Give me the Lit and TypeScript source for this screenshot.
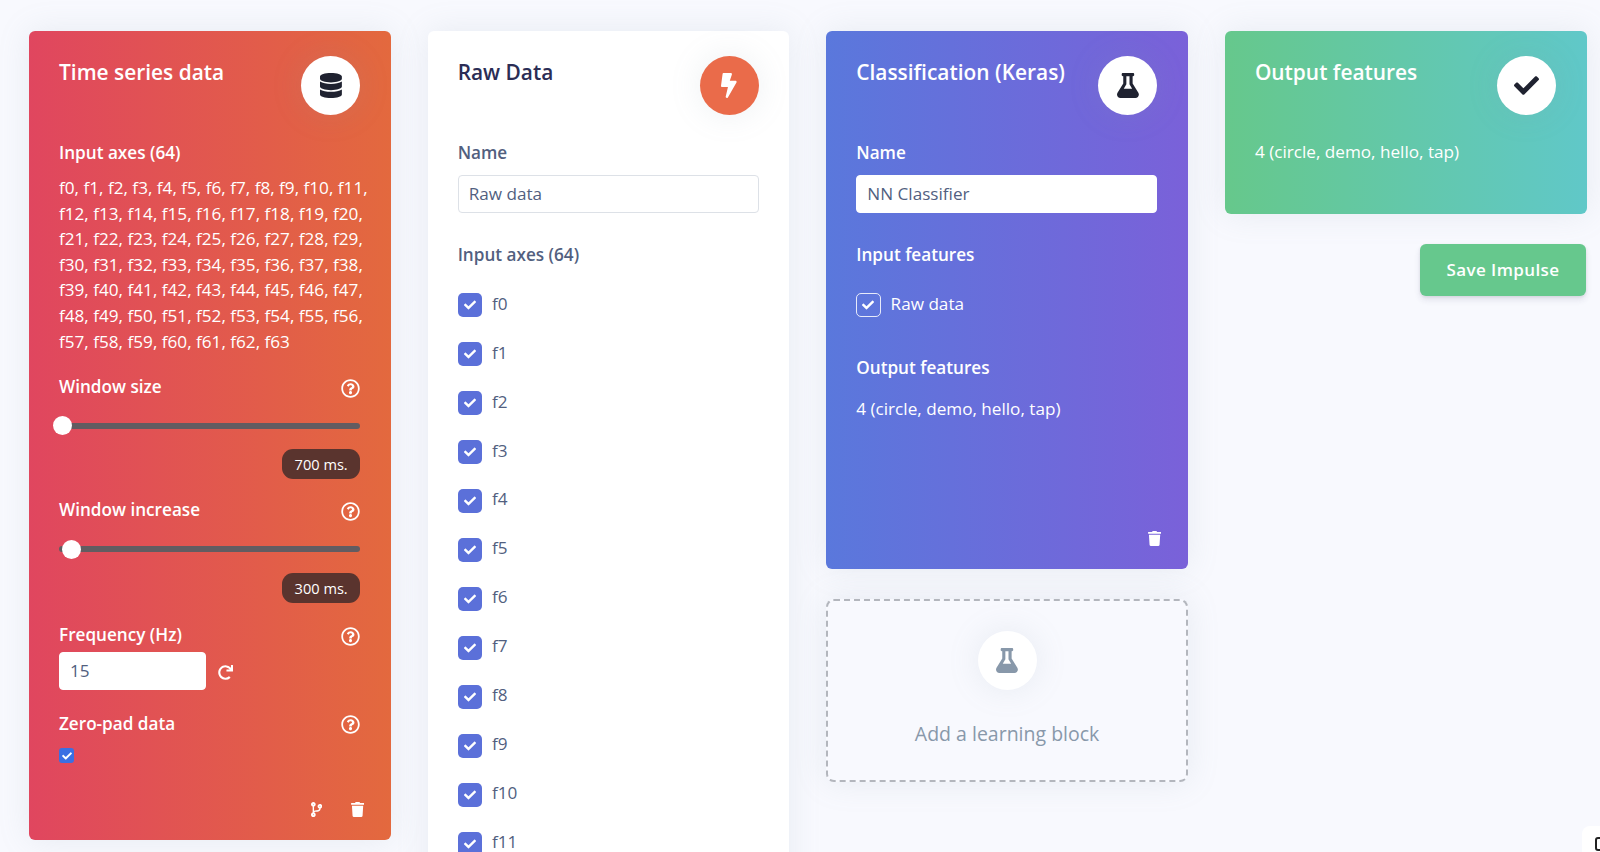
import { LitElement, html, css, svg } from "lit";
import { customElement } from "lit/decorators.js";

const ICONS: Record<string, [string, string]> = {
  database: ["0 0 448 512", "M448 73.143v45.714C448 159.143 347.667 192 224 192S0 159.143 0 118.857V73.143C0 32.857 100.333 0 224 0s224 32.857 224 73.143zM448 176v102.857C448 319.143 347.667 352 224 352S0 319.143 0 278.857V176c48.125 33.143 136.208 48.572 224 48.572S399.874 209.143 448 176zm0 160v102.857C448 479.143 347.667 512 224 512S0 479.143 0 438.857V336c48.125 33.143 136.208 48.572 224 48.572S399.874 369.143 448 336z"],
  bolt: ["0 0 320 512", "M296 160H180.6l42.6-129.8C227.2 15 215.7 0 200 0H56C44 0 33.8 8.9 32.2 20.8l-32 240C-1.7 275.2 9.5 288 24 288h118.7L96.6 482.5c-3.6 15.2 8 29.5 23.3 29.5 8.4 0 16.4-4.4 20.8-12l176-304c9.3-15.9-2.2-36-20.7-36z"],
  flask: ["0 0 448 512", "M437.2 403.5L320 215V64h8c13.3 0 24-10.7 24-24V24c0-13.3-10.7-24-24-24H120c-13.3 0-24 10.7-24 24v16c0 13.3 10.7 24 24 24h8v151L10.8 403.5C-18.5 450.6 15.3 512 70.9 512h306.2c55.7 0 89.4-61.5 60.1-108.5zM137.9 320l48.2-77.6c3.7-5.2 5.8-11.6 5.8-18.4V64h64v160c0 6.9 2.2 13.2 5.8 18.4l48.2 77.6h-172z"],
  check: ["0 0 512 512", "M173.898 439.404l-166.4-166.4c-9.997-9.997-9.997-26.206 0-36.204l36.203-36.204c9.997-9.998 26.207-9.998 36.204 0L192 312.69 432.095 72.596c9.997-9.997 26.207-9.997 36.204 0l36.203 36.204c9.997 9.997 9.997 26.206 0 36.204l-294.4 294.401c-9.998 9.997-26.207 9.997-36.204-.001z"],
  trash: ["0 0 448 512", "M432 32H312l-9.4-18.7A24 24 0 0 0 281.1 0H166.8a23.72 23.72 0 0 0-21.4 13.3L136 32H16A16 16 0 0 0 0 48v32a16 16 0 0 0 16 16h416a16 16 0 0 0 16-16V48a16 16 0 0 0-16-16zM53.2 467a48 48 0 0 0 47.9 45h245.8a48 48 0 0 0 47.9-45L416 128H32z"],
  redo: ["0 0 512 512", "M500.33 0h-47.41a12 12 0 0 0-12 12.57l4 82.76A247.42 247.42 0 0 0 256 8C119.34 8 7.9 119.53 8 256.19 8.1 393.07 119.1 504 256 504a247.1 247.1 0 0 0 166.18-63.91 12 12 0 0 0 .48-17.43l-34-34a12 12 0 0 0-16.38-.55A176 176 0 1 1 402.1 157.8l-101.53-4.87a12 12 0 0 0-12.57 12v47.41a12 12 0 0 0 12 12h200.33a12 12 0 0 0 12-12V12a12 12 0 0 0-12-12z"],
  help: ["0 0 512 512", "M256 8C119.043 8 8 119.083 8 256c0 136.997 111.043 248 248 248s248-111.003 248-248C504 119.083 392.957 8 256 8zm0 448c-110.532 0-200-89.431-200-200 0-110.495 89.472-200 200-200 110.491 0 200 89.471 200 200 0 110.53-89.431 200-200 200zm107.244-255.2c0 67.052-72.421 68.084-72.421 92.863V300c0 6.627-5.373 12-12 12h-45.647c-6.627 0-12-5.373-12-12v-8.659c0-35.745 27.1-50.034 47.579-61.516 17.561-9.845 28.324-16.541 28.324-29.579 0-17.246-21.999-28.693-39.784-28.693-23.189 0-33.894 10.977-48.942 29.969-4.057 5.12-11.46 6.071-16.666 2.124l-27.824-21.098c-5.107-3.872-6.251-11.066-2.644-16.363C184.846 131.491 214.94 112 261.794 112c49.071 0 101.45 38.304 101.45 88.8zM298 368c0 23.159-18.841 42-42 42s-42-18.841-42-42 18.841-42 42-42 42 18.841 42 42z"],
  branch: ["0 0 384 512", "M384 144c0-44.2-35.8-80-80-80s-80 35.8-80 80c0 36.4 24.3 67.1 57.5 76.8-.6 16.1-4.2 28.5-11 36.9-15.4 19.2-49.3 22.4-85.2 25.7-28.2 2.6-57.4 5.4-81.3 16.9v-144c32.5-10.2 56-40.5 56-76.3 0-44.2-35.8-80-80-80S0 35.8 0 80c0 35.8 23.5 66.1 56 76.3v199.3C23.5 365.9 0 396.2 0 432c0 44.2 35.8 80 80 80s80-35.8 80-80c0-34-21.2-63.1-51.2-74.6 3.1-5.2 7.8-9.8 14.9-13.4 16.2-8.2 40.4-10.4 66.1-12.8 42.2-3.9 90-8.4 118.2-43.4 14-17.4 21.1-39.8 21.5-67.9 31.6-10.8 54.5-40.7 54.5-75.9zM80 64c8.8 0 16 7.2 16 16s-7.2 16-16 16-16-7.2-16-16 7.2-16 16-16zm0 384c-8.8 0-16-7.2-16-16s7.2-16 16-16 16 7.2 16 16-7.2 16-16 16zm224-320c8.8 0 16 7.2 16 16s-7.2 16-16 16-16-7.2-16-16 7.2-16 16-16z"],
};

const icon = (name: string, cls: string) => {
  const [vb, d] = ICONS[name];
  return html`<svg class=${cls} viewBox=${vb} aria-hidden="true">${svg`<path d=${d}></path>`}</svg>`;
};

const AXES = Array.from({ length: 64 }, (_, i) => `f${i}`);

@customElement("app-root")
export class AppRoot extends LitElement {
  static styles = css`
    :host {
      display: block;
      position: relative;
      height: 852px;
      overflow: hidden;
      background: #f8f9fe;
      font-family: "Open Sans", "Noto Sans", sans-serif;
      font-size: 17.15px;
      line-height: 25.6px;
      color: #525f7f;
    }
    * { box-sizing: border-box; }
    svg { display: block; fill: currentColor; flex: none; }
    .grid {
      display: grid;
      grid-template-columns: repeat(4, 1fr);
      gap: 37px;
      padding: 31px 13.5px 0 29px;
      align-items: start;
    }
    .col { display: flex; flex-direction: column; }
    .col3 { gap: 30px; }
    .col4 { gap: 30px; }
    .card {
      display: flex;
      flex-direction: column;
      border-radius: 6px;
      padding: 25px 30.5px 0 30px;
      background: #fff;
      box-shadow: 0 0 32px 0 rgba(136, 152, 170, 0.15);
    }
    .card > * { flex: none; }
    .red { background: linear-gradient(90deg, #e0465f 0, #e3693e 100%); color: #fff; height: 809px; }
    .blue { background: linear-gradient(90deg, #5a78dc 0, #7a61d9 100%); color: #fff; height: 538px; }
    .green { background: linear-gradient(88deg, #66c88b 0, #60c8c9 100%); color: #fff; height: 183px; }
    .raw { height: 900px; }
    .head { display: flex; justify-content: space-between; align-items: flex-start; height: 59px; }
    .title { font-size: 20.9px; line-height: 32px; font-weight: 600; color: #fff; }
    .raw .title { color: #2b2d55; }
    .circle {
      flex: none;
      width: 59px;
      height: 59px;
      border-radius: 50%;
      background: #fff;
      display: flex;
      align-items: center;
      justify-content: center;
      color: #1f2230;
      box-shadow: 0 0 32px 0 rgba(136, 152, 170, 0.15);
    }
    .circle.orange { background: #ea6b4a; color: #fff; }
    .i24 { height: 25px; width: auto; }
    .ico-check { width: 25px; height: 25px; }
    .label { font-weight: 600; }
    .raw .label { color: #525f7f; }
    .first { margin-top: 25px; }
    .axes { margin-top: 9.5px; margin-right: -12px; }
    .row { display: flex; justify-content: space-between; align-items: center; }
    .help { width: 19px; height: 19px; margin-top: 3px; }
    .gap-19 { margin-top: 19px; }
    .gap-19h { margin-top: 19.5px; }
    .gap-18 { margin-top: 18px; }
    .slider { position: relative; margin-top: 17px; height: 19px; display: flex; align-items: center; }
    .track { flex: 1; height: 6px; border-radius: 3px; background: #625c61; }
    .thumb {
      position: absolute;
      top: 0;
      width: 19px;
      height: 19px;
      border-radius: 50%;
      background: #fff;
    }
    .badge-row { display: flex; justify-content: flex-end; margin-top: 14px; }
    .badge {
      height: 30px;
      width: 78px;
      border-radius: 11px;
      background: #5a342e;
      color: #fff;
      font-size: 14.6px;
      line-height: 30px;
      text-align: center;
    }
    input.text {
      display: block;
      font: inherit;
      color: #525f7f;
      height: 38px;
      border: 1px solid #dde1e7;
      border-radius: 4px;
      padding: 0 10px;
      background: #fff;
      outline: none;
      width: 100%;
    }
    .blue input.text, .red input.text { border-color: #fff; }
    .name { margin-top: 9px; }
    .after-name { margin-top: 29.5px; }
    .freq { display: flex; align-items: center; gap: 12px; margin-top: 4px; }
    .freq input.text { width: 147px; }
    .redo { width: 15px; height: 15px; margin-top: 3px; }
    .gap-z { margin-top: 21px; }
    .mini {
      margin-top: 12px;
      width: 15px;
      height: 15px;
      border-radius: 3px;
      background: #3a6fe3;
      color: #fff;
      display: flex;
      align-items: center;
      justify-content: center;
    }
    .mini svg { width: 10px; height: 10px; }
    .card > .foot { margin-top: auto; margin-bottom: 23px; display: flex; justify-content: flex-end; gap: 29px; margin-right: -4px; }
    .foot svg { height: 15px; width: auto; }
    .raw-list { margin-top: 25px; display: flex; flex-direction: column; gap: 24.7px; }
    .opt { display: flex; align-items: center; gap: 10px; height: 24.3px; }
    .opt-text { padding-bottom: 3px; }
    .opt-first { margin-top: 25px; }
    .box {
      width: 24.3px;
      height: 24.3px;
      flex: none;
      border-radius: 5px;
      background: #5b70d9;
      color: #fff;
      display: flex;
      align-items: center;
      justify-content: center;
    }
    .box svg { width: 12px; height: 12px; }
    .box.ghost { background: transparent; border: 1px solid rgba(255, 255, 255, 0.85); }
    .opts-out { margin-top: 38.5px; }
    .value { margin-top: 14.5px; }
    .value-g { margin-top: 24px; }
    .add {
      height: 183px;
      border: 2px dashed #b3b6bd;
      border-radius: 8px;
      background: #f8f9fe;
      display: flex;
      flex-direction: column;
      align-items: center;
      padding-top: 30px;
      box-shadow: 0 0 32px 0 rgba(136, 152, 170, 0.15);
      color: #8898aa;
    }
    .add .circle { color: #8898aa; }
    .add-text { font-size: 19.5px; line-height: 32px; margin-top: 28px; }
    .save {
      align-self: flex-end;
      width: 166px;
      height: 52px;
      margin-right: 0.5px;
      border: none;
      border-radius: 6px;
      background: #66c88d;
      color: #fff;
      font: 600 17px/26px "Open Sans", "Noto Sans", sans-serif;
      letter-spacing: 0.4px;
      box-shadow: 0 4px 6px rgba(50, 50, 93, 0.11), 0 1px 3px rgba(0, 0, 0, 0.08);
    }
    .corner {
      position: absolute;
      right: -8px;
      bottom: -8px;
      width: 26px;
      height: 34px;
      padding: 11px 0 0 13px;
      border-radius: 8px 0 0 0;
      background: #fff;
    }
    .corner span { display: block; width: 14px; height: 14px; border: 2px solid #222; border-radius: 3px; }
  `;

  private slider(label: string, ms: number, left: number, cls: string) {
    return html`
      <div class="row ${cls}"><span class="label">${label}</span>${icon("help", "help")}</div>
      <div class="slider">
        <div class="track"></div>
        <div class="thumb" style="left:${left}px"></div>
      </div>
      <div class="badge-row"><div class="badge">${ms} ms.</div></div>
    `;
  }

  render() {
    return html`
      <div class="grid">
        <div class="col">
          <section class="card red">
            <div class="head">
              <div class="title">Time series data</div>
              <div class="circle">${icon("database", "i24")}</div>
            </div>
            <div class="label first">Input axes (64)</div>
            <div class="axes">${AXES.join(", ")}</div>
            ${this.slider("Window size", 700, -6, "gap-19h")}
            ${this.slider("Window increase", 300, 2.5, "gap-18")}
            <div class="row gap-19"><span class="label">Frequency (Hz)</span>${icon("help", "help")}</div>
            <div class="freq">
              <input class="text" .value=${"15"} />
              ${icon("redo", "redo")}
            </div>
            <div class="row gap-z"><span class="label">Zero-pad data</span>${icon("help", "help")}</div>
            <div class="mini">${icon("check", "")}</div>
            <div class="foot">${icon("branch", "")}${icon("trash", "")}</div>
          </section>
        </div>

        <div class="col">
          <section class="card raw">
            <div class="head">
              <div class="title">Raw Data</div>
              <div class="circle orange">${icon("bolt", "i24")}</div>
            </div>
            <div class="label first">Name</div>
            <input class="text name" .value=${"Raw data"} />
            <div class="label after-name">Input axes (64)</div>
            <div class="raw-list">
              ${AXES.slice(0, 12).map(
                (a) => html`<div class="opt"><span class="box">${icon("check", "")}</span><span class="opt-text">${a}</span></div>`
              )}
            </div>
          </section>
        </div>

        <div class="col col3">
          <section class="card blue">
            <div class="head">
              <div class="title">Classification (Keras)</div>
              <div class="circle">${icon("flask", "i24")}</div>
            </div>
            <div class="label first">Name</div>
            <input class="text name" .value=${"NN Classifier"} />
            <div class="label after-name">Input features</div>
            <div class="opt opt-first"><span class="box ghost">${icon("check", "")}</span><span class="opt-text">Raw data</span></div>
            <div class="label opts-out">Output features</div>
            <div class="value">4 (circle, demo, hello, tap)</div>
            <div class="foot">${icon("trash", "")}</div>
          </section>
          <section class="add">
            <div class="circle">${icon("flask", "i24")}</div>
            <div class="add-text">Add a learning block</div>
          </section>
        </div>

        <div class="col col4">
          <section class="card green">
            <div class="head">
              <div class="title">Output features</div>
              <div class="circle">${icon("check", "ico-check")}</div>
            </div>
            <div class="value-g">4 (circle, demo, hello, tap)</div>
          </section>
          <button class="save">Save Impulse</button>
        </div>
      </div>
      <div class="corner"><span></span></div>
    `;
  }
}
